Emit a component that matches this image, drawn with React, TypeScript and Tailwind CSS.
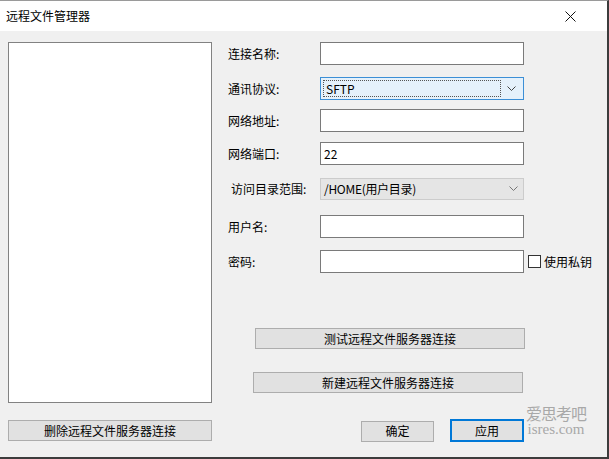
import React from 'react'

const FONT = { fontFamily: '"Noto Sans CJK SC", "Microsoft YaHei", sans-serif' }

function Chevron({ color = '#333' }: { color?: string }) {
  return (
    <svg width="9" height="6" viewBox="0 0 9 6" className="shrink-0">
      <path d="M0.5 0.5 L4.5 4.5 L8.5 0.5" fill="none" stroke={color} strokeWidth="1" />
    </svg>
  )
}

function TextBox({ value = '', className = '' }: { value?: string; className?: string }) {
  return (
    <div className={`flex h-[23px] w-[204px] items-center border border-[#7a7a7a] bg-white px-[3px] text-[12px] text-black ${className}`}>
      {value}
    </div>
  )
}

function Button({ label, className = '' }: { label: string; className?: string }) {
  return (
    <div className={`flex h-[21px] items-center justify-center border border-[#adadad] bg-[#e1e1e1] text-[12px] text-black ${className}`}>
      {label}
    </div>
  )
}

function Row({ label, className = '', labelClass = '', children }: { label: string; className?: string; labelClass?: string; children: React.ReactNode }) {
  return (
    <div className={`flex items-center ${className}`}>
      <div className={`w-[92px] shrink-0 text-[12px] text-black ${labelClass}`}>{label}</div>
      {children}
    </div>
  )
}

export default function App() {
  return (
    <div style={FONT} className="relative flex h-[459px] w-[609px] flex-col overflow-hidden border-b-2 border-r-2 border-t border-[#3c3c3c] border-t-[#9a9a9a] bg-[#f0f0f0]">
      {/* title bar */}
      <div className="flex h-[30px] shrink-0 items-center justify-between bg-white pl-[6px] pr-[31px]">
        <span className="text-[12px] text-black">远程文件管理器</span>
        <svg width="11" height="11" viewBox="0 0 11 11">
          <path d="M0.5 0.5 L10.5 10.5 M10.5 0.5 L0.5 10.5" stroke="#111" strokeWidth="1" />
        </svg>
      </div>

      <div className="flex">
        {/* left column */}
        <div className="ml-[8px] flex w-[204px] flex-col pt-[11px]">
          <div className="h-[361px] border border-[#828282] bg-white" />
          <Button label="删除远程文件服务器连接" className="mt-[17px]" />
        </div>

        {/* right column */}
        <div className="ml-[16px] flex flex-col">
          <Row label="连接名称:" className="mt-[11px]">
            <TextBox />
          </Row>
          <Row label="通讯协议:" className="mt-[12px]">
            <div className="flex h-[23px] w-[204px] items-center border border-[#3c8fd6] bg-[#e5f1fb] p-[2px]">
              <div className="flex h-full flex-1 items-center border border-dotted border-[#555] px-[2px] text-[12px] text-black">SFTP</div>
              <div className="flex w-[20px] items-center justify-center">
                <Chevron color="#444" />
              </div>
            </div>
          </Row>
          <Row label="网络地址:" className="mt-[9px]">
            <TextBox />
          </Row>
          <Row label="网络端口:" className="mt-[10px]">
            <TextBox value="22" />
          </Row>
          <Row label="访问目录范围:" labelClass="pl-[3px]" className="mt-[13px]">
            <div className="flex h-[22px] w-[204px] items-center border border-[#cccccc] bg-[#e5e5e5] pl-[3px]">
              <span className="flex-1 text-[12px] tracking-[-0.3px] text-black">/HOME(用户目录)</span>
              <div className="flex w-[20px] items-center justify-center">
                <Chevron color="#777" />
              </div>
            </div>
          </Row>
          <Row label="用户名:" className="mt-[15px]">
            <TextBox />
          </Row>
          <Row label="密码:" className="mt-[12px]">
            <TextBox />
            <div className="ml-[4px] h-[13px] w-[13px] border border-[#333] bg-white" />
            <span className="ml-[3px] text-[12px] text-black">使用私钥</span>
          </Row>

          <Button label="测试远程文件服务器连接" className="ml-[27px] mt-[55px] w-[270px]" />
          <Button label="新建远程文件服务器连接" className="ml-[25px] mt-[23px] w-[270px]" />

          <div className="ml-[133px] mt-[26px] flex items-center">
            <Button label="确定" className="mt-[1px] w-[73px]" />
            <div className="ml-[16px] flex h-[23px] w-[74px] items-center justify-center border-2 border-[#0078d7] bg-[#e1e1e1] text-[12px] text-black">
              应用
            </div>
          </div>
        </div>
      </div>

      {/* watermark */}
      <div className="pointer-events-none absolute left-[526px] top-[404px] flex flex-col items-center text-[#8a8a8a] opacity-70">
        <span className="text-[16px] leading-[17px] tracking-[-1px]">爱思考吧</span>
        <span className="text-[15px] leading-[15px]" style={{ fontFamily: '"Liberation Serif", serif' }}>isres.com</span>
      </div>
    </div>
  )
}
